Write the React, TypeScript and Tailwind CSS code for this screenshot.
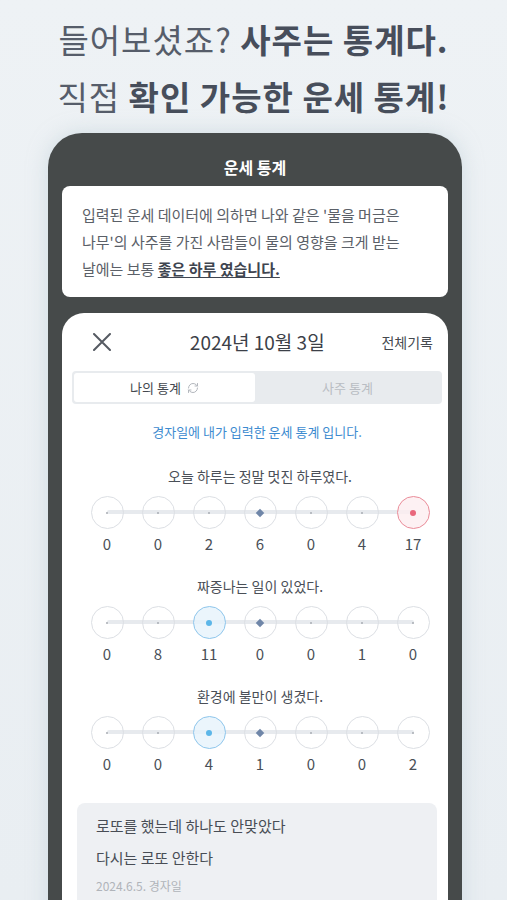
import { RefreshCw } from "lucide-react";

const font = { fontFamily: '"Noto Sans CJK KR", "Noto Sans", sans-serif' };

type Mark = "none" | "mid" | "red" | "blue";

const stats: { q: string; counts: number[]; pick: number; color: Mark }[] = [
  { q: "오늘 하루는 정말 멋진 하루였다.", counts: [0, 0, 2, 6, 0, 4, 17], pick: 6, color: "red" },
  { q: "짜증나는 일이 있었다.", counts: [0, 8, 11, 0, 0, 1, 0], pick: 2, color: "blue" },
  { q: "환경에 불만이 생겼다.", counts: [0, 0, 4, 1, 0, 0, 2], pick: 2, color: "blue" },
];

const Dot = ({ kind }: { kind: Mark }) => {
  if (kind === "red") {
    return (
      <div className="w-[33px] h-[33px] rounded-full border-[1.5px] border-[#ea8c99] bg-[#fdeef0]/80 flex items-center justify-center">
        <div className="w-[6px] h-[6px] rounded-full bg-[#e9677c]" />
      </div>
    );
  }
  if (kind === "blue") {
    return (
      <div className="w-[33px] h-[33px] rounded-full border-[1.5px] border-[#8ec6ec] bg-[#e6f2fb]/80 flex items-center justify-center">
        <div className="w-[6px] h-[6px] rounded-full bg-[#5cb6e8]" />
      </div>
    );
  }
  return (
    <div className="w-[33px] h-[33px] rounded-full border-[1.5px] border-[#dcdfe4] flex items-center justify-center">
      {kind === "mid" ? (
        <div className="w-[6px] h-[6px] rotate-45 bg-[#6f86a8]" />
      ) : (
        <div className="w-[2px] h-[2px] rounded-full bg-[#a9adb3]" />
      )}
    </div>
  );
};

const StatRow = ({ q, counts, pick, color }: (typeof stats)[number]) => (
  <div className="flex flex-col items-center">
    <p className="text-[14px] leading-[20px] text-[#4a4f57]">{q}</p>
    <div className="relative mt-[10px] flex gap-[18px]">
      <div className="absolute left-[16px] right-[16px] top-[14px] h-[4px] rounded-full bg-[#e7eaee]" />
      {counts.map((c, i) => (
        <div key={i} className="relative flex flex-col items-center">
          <Dot kind={i === pick ? color : i === 3 ? "mid" : "none"} />
          <span className="mt-[5px] text-[15px] leading-[20px] text-[#4a4f57]">{c}</span>
        </div>
      ))}
    </div>
  </div>
);

export default function App() {
  return (
    <div
      className="h-[900px] overflow-hidden bg-gradient-to-b from-[#eef2f5] to-[#e9eef2]"
      style={font}
    >
      <h1 className="pt-[11px] text-center text-[33px] leading-[57px] text-[#565d6a] tracking-[1px]">
        들어보셨죠? <b className="font-bold text-[#474e5b]">사주는 통계다.</b>
        <br />
        직접 <b className="font-bold text-[#474e5b]">확인 가능한 운세 통계!</b>
      </h1>

      <div className="mt-[8px] mx-[48px] w-[414px] h-[900px] rounded-[34px] bg-[#464a4a] px-[14px] pt-[22px] shadow-[0_0_20px_rgba(180,200,210,0.5)]">
        <h2 className="text-center text-[16px] leading-[24px] font-bold text-white">운세 통계</h2>

        <div className="mt-[7px] rounded-[8px] bg-white pl-[20px] pr-[12px] py-[15px] text-[15px] leading-[27px] text-[#5b6068] break-keep">
          입력된 운세 데이터에 의하면 나와 같은 '물을 머금은 나무'의 사주를 가진 사람들이 물의 영향을 크게 받는 날에는 보통{" "}
          <span className="font-bold text-[#3f4550] underline underline-offset-[2px]">좋은 하루 였습니다.</span>
        </div>

        <div className="mt-[16px] rounded-t-[22px] bg-white pl-[10px] pr-[6px] h-[700px]">
          <div className="h-[58px] flex items-center justify-between pl-[21px] pr-[9px]">
            <svg width="18" height="18" viewBox="0 0 18 18" className="text-[#555a62]">
              <path d="M1 1 L17 17 M17 1 L1 17" stroke="currentColor" strokeWidth="2" strokeLinecap="round" />
            </svg>
            <span className="ml-[22px] text-[19px] text-[#3c4048]">2024년 10월 3일</span>
            <span className="text-[14px] text-[#45494f]">전체기록</span>
          </div>

          <div className="h-[33px] rounded-[4px] bg-[#e8ebee] p-[2px] flex">
            <div className="w-[181px] rounded-[3px] bg-white flex items-center justify-center gap-[6px] text-[13px] text-[#44484f]">
              나의 통계
              <RefreshCw size={12} strokeWidth={2} className="text-[#b3b7bd]" />
            </div>
            <div className="flex-1 flex items-center justify-center text-[13px] text-[#b9bdc3]">사주 통계</div>
          </div>

          <p className="mt-[18px] text-center text-[13px] leading-[20px] text-[#3d8bd0]">
            경자일에 내가 입력한 운세 통계 입니다.
          </p>

          <div className="pl-[6px] mt-[24px] flex flex-col gap-[22px]">
            {stats.map((s) => (
              <StatRow key={s.q} {...s} />
            ))}
          </div>

          <div className="mt-[29px] ml-[5px] mr-[5px] rounded-[8px] bg-[#eef0f3] px-[19px] pt-[7px] pb-[20px]">
            <p className="text-[15px] leading-[32px] text-[#484d55]">로또를 했는데 하나도 안맞았다</p>
            <p className="text-[15px] leading-[32px] text-[#484d55]">다시는 로또 안한다</p>
            <p className="mt-[2px] text-[12px] leading-[20px] text-[#b0b4ba]">2024.6.5. 경자일</p>
          </div>
        </div>
      </div>
    </div>
  );
}
